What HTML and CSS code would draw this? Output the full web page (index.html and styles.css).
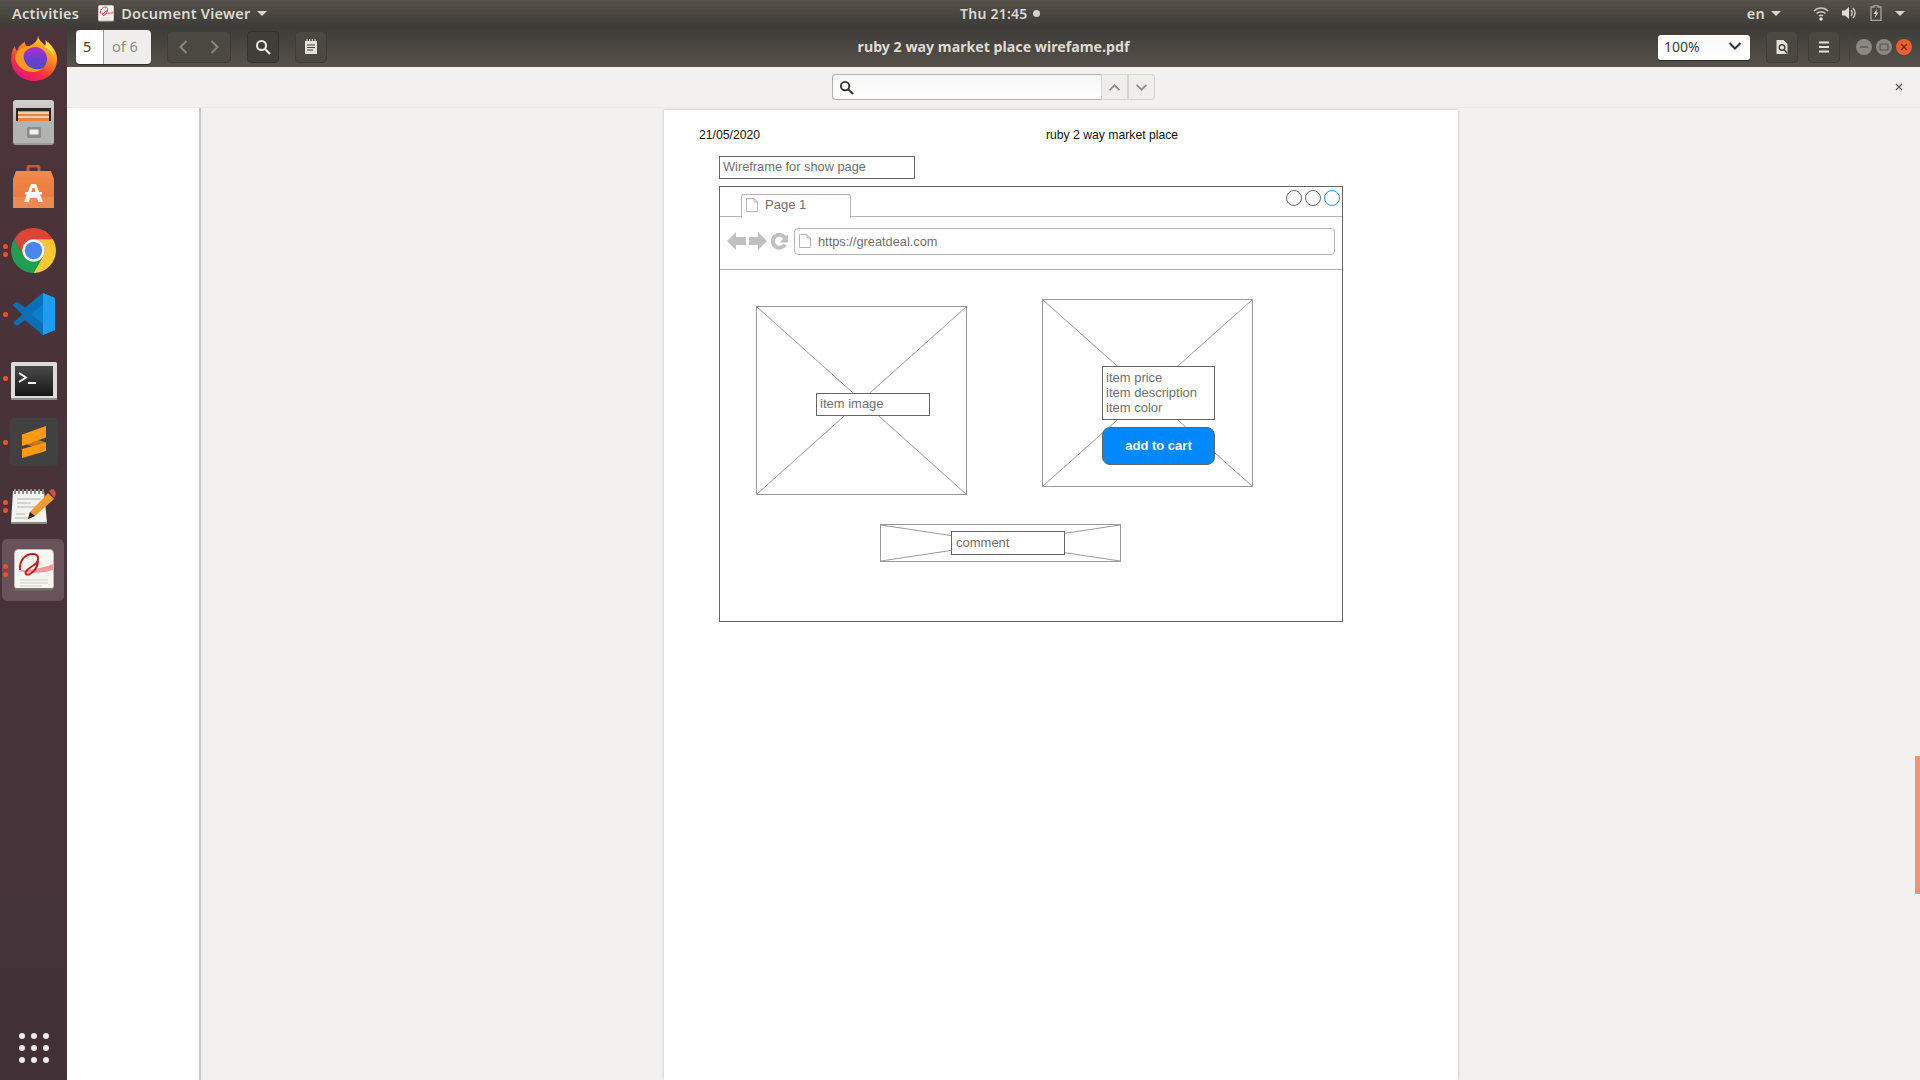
FILE: index.html
```html
<!DOCTYPE html>
<html lang="en">
<head>
<meta charset="utf-8">
<title>ruby 2 way market place wirefame.pdf</title>
<link rel="stylesheet" href="styles.css">
</head>
<body>
<svg class="defs" width="0" height="0" aria-hidden="true">
  <defs>
    <linearGradient id="ffBase" x1="0.8" y1="0.1" x2="0.3" y2="1">
      <stop offset="0" stop-color="#ffd43a"/><stop offset="0.35" stop-color="#ff8a1e"/><stop offset="0.7" stop-color="#f5333d"/><stop offset="1" stop-color="#e3127f"/>
    </linearGradient>
    <linearGradient id="ffCore" x1="0.5" y1="0" x2="0.5" y2="1">
      <stop offset="0" stop-color="#b52bc9"/><stop offset="0.5" stop-color="#6b3ed0"/><stop offset="1" stop-color="#4a4cc9"/>
    </linearGradient>
    <linearGradient id="bag" x1="0" y1="0" x2="0" y2="1">
      <stop offset="0" stop-color="#f08a4a"/><stop offset="1" stop-color="#e8743a"/>
    </linearGradient>
    <linearGradient id="cab" x1="0" y1="0" x2="0" y2="1">
      <stop offset="0" stop-color="#d0d0ce"/><stop offset="1" stop-color="#9a9a98"/>
    </linearGradient>
    <linearGradient id="term" x1="0" y1="0" x2="0" y2="1">
      <stop offset="0" stop-color="#4a4a4a"/><stop offset="1" stop-color="#161616"/>
    </linearGradient>
    <symbol id="evince" viewBox="0 0 40 42">
      <rect x="0.5" y="0.5" width="39" height="40" rx="4" fill="#f8f6f3" stroke="#bdbab5"/>
      <rect x="1" y="39" width="38" height="2.5" rx="1" fill="#77736e"/>
      <path d="M4 22C14 20 25 21 39 15V21C27 25 15 24 4 22Z" fill="#ee9a9a"/>
      <path d="M6 21C5 11 12 4 20 5C26 6 25 13 20 16C15 19 10 23 12 25C15 28 24 20 24 12" fill="none" stroke="#d2181f" stroke-width="2"/>
      <path d="M6 31H34M6 34H34M6 37H28" stroke="#cfccc7" stroke-width="1"/>
    </symbol>
  </defs>
</svg>

<header class="topbar">
  <div class="top-left">
    <span class="activities">Activities</span>
    <span class="app-menu">
      <svg class="app-icon"><use href="#evince"/></svg>
      <span>Document Viewer</span>
      <i class="caret"></i>
    </span>
  </div>
  <div class="clock"><span>Thu 21:45</span><i class="clock-dot"></i></div>
  <div class="top-right">
    <span class="lang">en</span><i class="caret lang-caret"></i>
    <svg class="tray wifi" viewBox="0 0 16 16"><path d="M1 6C5 2 11 2 15 6M3.5 8.5C6 6 10 6 12.500 8.500M6 11C7 10 9 10 10 11" fill="none" stroke="#c9c6bf" stroke-width="1.500"/><circle cx="8" cy="14" r="1.700" fill="#e6e3dc"/></svg>
    <svg class="tray vol" viewBox="0 0 16 16"><path d="M1 5.500H4L8 2V14L4 10.500H1Z" fill="#e0ddd6"/><path d="M10 5C11.500 7 11.500 9 10 11M12 3C14.500 6 14.500 10 12 13" fill="none" stroke="#c9c6bf" stroke-width="1.400"/></svg>
    <svg class="tray batt" viewBox="0 0 12 16"><path d="M4 .5H8V2H11V15.500H1V2H4Z" fill="none" stroke="#a5a29b" stroke-width="1.300"/><path d="M7 4L3.500 9H5.700L4.700 13L8.500 7.500H6.300Z" fill="#e0ddd6"/></svg>
    <i class="caret sys-caret"></i>
  </div>
</header>

<div class="desktop">
  <nav class="dock">
    <div class="dock-list">
      <div class="dock-item">
        <svg class="ic-firefox" viewBox="0 0 46 46">
          <path d="M27 0C27 5 32 8 36 12C37 9 37 8 37 7C43 13 46 18 46 24C46 37 36 46 23 46C10 46 0 36 0 24C0 19 1 15 4 11C4 13 5 15 6 16C8 10 12 8 14 7C14 10 15 11 17 12C22 9 27 7 27 0Z" fill="url(#ffBase)"/>
          <circle cx="24" cy="24" r="12" fill="url(#ffCore)"/>
          <path d="M4 22C7 13 15 10 24 11C19 12 17 14 14 16C12 19 12 23 14 27C17 33 25 36 32 33C26 39 15 38 9 32C6 29 4 26 4 22Z" fill="#ff9a22"/>
          <path d="M34 5C39 9 43 15 43 22C41 17 38 14 34 12C35 9 35 7 34 5Z" fill="#ffe34a"/>
        </svg>
      </div>
      <div class="dock-item">
        <svg class="ic-files" viewBox="0 0 41 45">
          <rect x="0" y="0" width="41" height="45" rx="3" fill="url(#cab)"/>
          <rect x="3" y="8" width="35" height="14" fill="#2a2522"/>
          <rect x="5" y="11" width="31" height="11" fill="#e8853a"/>
          <path d="M5 13H36M5 17H36" stroke="#f7e8d4" stroke-width="1.400"/>
          <rect x="0" y="21" width="41" height="22" fill="#b3b3b1"/>
          <rect x="14" y="27" width="14" height="11" rx="1.500" fill="#8b8b89"/>
          <rect x="16.500" y="29.500" width="9" height="5" fill="#f1f1ef"/>
        </svg>
      </div>
      <div class="dock-item">
        <svg class="ic-soft" viewBox="0 0 41 43">
          <path d="M15 8V3Q15 1 17 1H24Q26 1 26 3V8" fill="none" stroke="#c75a26" stroke-width="3"/>
          <path d="M3 6H38L41 14V43H0V14Z" fill="url(#bag)"/>
          <path d="M0 32H41V43H0Z" fill="#ec8a52"/>
          <path d="M18 19H23L30 37H25.500L24 33H17L15.500 37H11ZM19.500 23L18 28H23L21.500 23Z" fill="#fff" fill-rule="evenodd"/>
          <rect x="12" y="27" width="17" height="2.500" fill="#fff"/>
        </svg>
      </div>
      <div class="dock-item">
        <span class="pips"><i></i><i></i></span>
        <svg class="ic-chrome" viewBox="0 0 48 48">
          <path d="M24 2A22 22 0 0 0 5 13l9.500 16.500A11 11 0 0 1 24 13h19A22 22 0 0 0 24 2z" fill="#db4437"/>
          <path d="M43 13H24a11 11 0 0 1 9.500 16.500L24 46A22 22 0 0 0 43 13z" fill="#fcc934"/>
          <path d="M5 13A22 22 0 0 0 24 46l9.500-16.500a11 11 0 0 1-19 0z" fill="#1f9e50"/>
          <circle cx="24" cy="24" r="11" fill="#f4f4f4"/>
          <circle cx="24" cy="24" r="8.500" fill="#4a86f0"/>
        </svg>
      </div>
      <div class="dock-item">
        <span class="pips"><i></i></span>
        <svg class="ic-code" viewBox="0 0 42 42">
          <path d="M30 0L42 5V37L30 42L0 12L4 9L12 15Z" fill="#0a7fcb"/>
          <path d="M30 0L42 5V37L30 42L12 27L4 33L0 30L10 21L0 12L4 9L12 15ZM30 11L18 21L30 31Z" fill="#0a6fb8" fill-rule="evenodd"/>
          <path d="M30 0L42 5V37L30 42Z" fill="#1f9df0"/>
        </svg>
      </div>
      <div class="dock-item">
        <span class="pips"><i></i></span>
        <svg class="ic-term" viewBox="0 0 46 38">
          <rect x="0" y="0" width="46" height="38" rx="1.500" fill="#dcdcda"/>
          <rect x="0" y="36" width="46" height="2" fill="#8e8e8c"/>
          <rect x="4" y="4" width="38" height="30" fill="url(#term)"/>
          <path d="M8 11L15 15.500L8 20" fill="none" stroke="#f4f4f4" stroke-width="2"/>
          <path d="M17 21H25" stroke="#f4f4f4" stroke-width="2"/>
        </svg>
      </div>
      <div class="dock-item">
        <span class="pips"><i></i></span>
        <svg class="ic-sub" viewBox="0 0 48 48">
          <rect width="48" height="48" rx="4" fill="#414141"/>
          <path d="M12 16.500L36 24.500V33L12 25Z" fill="#c9780e"/>
          <path d="M36 8L12 16.500V28L36 19.500Z" fill="#ff9a12"/>
          <path d="M36 24.500V33L12 40V31Z" fill="#ff9a12"/>
        </svg>
      </div>
      <div class="dock-item">
        <span class="pips"><i></i><i></i></span>
        <svg class="ic-gedit" viewBox="0 0 45 37">
          <path d="M2 3H33L36 35H0Z" fill="#f3f3f0"/>
          <path d="M0 34H36V36H0Z" fill="#8c8a85"/>
          <path d="M4 1V6M8 1V6M12 1V6M16 1V6M20 1V6M24 1V6M28 1V6M32 1V6" stroke="#8c8a85" stroke-width="2"/>
          <path d="M6 11H30M6 15H20M6 19H26M5 26H14M4 30H18" stroke="#b5b3ae" stroke-width="1.200"/>
          <path d="M37 5L43 11L24 28L17 31L19 24Z" fill="#f29b2e"/>
          <path d="M38 3L41 1Q43 1 44 3L45 6L43 10Z" fill="#d84a4a"/>
          <path d="M19 24L24 28L17 31Z" fill="#2b2b2b"/>
        </svg>
      </div>
      <div class="dock-item active">
        <span class="pips"><i></i><i></i></span>
        <svg class="ic-evince"><use href="#evince"/></svg>
      </div>
    </div>
    <div class="apps">
      <i></i><i></i><i></i><i></i><i></i><i></i><i></i><i></i><i></i>
    </div>
  </nav>

  <div class="window">
    <div class="headerbar">
      <div class="hb-left">
        <div class="pagebox"><span class="page-cur">5</span><span class="page-of">of 6</span></div>
        <div class="hbtn nav-group">
          <svg viewBox="0 0 16 16"><path d="M10.500 2L4.500 8L10.500 14" fill="none" stroke="#8a877e" stroke-width="2"/></svg>
          <svg viewBox="0 0 16 16"><path d="M5.500 2L11.500 8L5.500 14" fill="none" stroke="#8a877e" stroke-width="2"/></svg>
        </div>
        <div class="hbtn hbtn-on">
          <svg viewBox="0 0 16 16"><circle cx="6.500" cy="6.500" r="4.500" fill="none" stroke="#eeeae2" stroke-width="2"/><path d="M10 10L15 15" stroke="#eeeae2" stroke-width="2.200"/></svg>
        </div>
        <div class="hbtn">
          <svg viewBox="0 0 16 16"><path d="M2 2H14V15H2Z" fill="#e4e1da"/><path d="M4 0V3M6.700 0V3M9.300 0V3M12 0V3" stroke="#e4e1da" stroke-width="1"/><path d="M4 6H12M4 8.500H12M4 11H10" stroke="#45433d" stroke-width="1"/></svg>
        </div>
      </div>
      <div class="hb-title">ruby 2 way market place wirefame.pdf</div>
      <div class="hb-right">
        <div class="zoombox"><span>100%</span><svg viewBox="0 0 14 10"><path d="M1.500 2L7 7.500L12.500 2" fill="none" stroke="#33322e" stroke-width="2"/></svg></div>
        <div class="hbtn"><svg viewBox="0 0 16 16"><path d="M2.500 1H9.500L13.500 5V15H2.500Z" fill="#e4e1da"/><circle cx="8" cy="8.500" r="2.800" fill="none" stroke="#45433d" stroke-width="1.400"/><path d="M10 10.500L13 14" stroke="#45433d" stroke-width="1.600"/></svg></div>
        <div class="hbtn hbtn-menu"><svg viewBox="0 0 16 16"><path d="M3 3.500H13M3 8H13M3 12.500H13" stroke="#e4e1da" stroke-width="2"/></svg></div>
        <i class="hb-sep"></i>
        <div class="winctl">
          <span class="wbtn"><svg viewBox="0 0 16 16"><path d="M4 8H12" stroke="#56534c" stroke-width="1.200"/></svg></span>
          <span class="wbtn"><svg viewBox="0 0 16 16"><rect x="4" y="5" width="8" height="6" rx="1" fill="none" stroke="#56534c" stroke-width="1.200"/></svg></span>
          <span class="wbtn wclose"><svg viewBox="0 0 16 16"><path d="M5 5L11 11M11 5L5 11" stroke="#7a2a10" stroke-width="1.400"/></svg></span>
        </div>
      </div>
    </div>

    <div class="findbar">
      <span></span>
      <div class="find">
        <div class="find-entry"><svg viewBox="0 0 16 16"><circle cx="6.500" cy="6.500" r="4.500" fill="none" stroke="#33322e" stroke-width="2"/><path d="M10 10L15 15" stroke="#33322e" stroke-width="2.200"/></svg></div>
        <div class="find-btn"><svg viewBox="0 0 14 10"><path d="M1.500 8L7 2.500L12.500 8" fill="none" stroke="#8f8d86" stroke-width="2"/></svg></div>
        <div class="find-btn"><svg viewBox="0 0 14 10"><path d="M1.500 2L7 7.500L12.500 2" fill="none" stroke="#8f8d86" stroke-width="2"/></svg></div>
      </div>
      <svg class="find-close" viewBox="0 0 8 8"><path d="M1 1L7 7M7 1L1 7" stroke="#55534d" stroke-width="1.100"/></svg>
    </div>

    <div class="content">
      <aside class="sidebar"></aside>
      <main class="docview">
        <article class="page">
          <div class="page-head"><span class="page-date">21/05/2020</span><span>ruby 2 way market place</span></div>
          <div class="wf-title">Wireframe for show page</div>
          <section class="frame">
            <div class="tabstrip">
              <div class="tab">
                <svg class="doc-ic" viewBox="0 0 12 14"><path d="M.5.5H8L11.500 4V13.500H.5ZM8 .5V4H11.500" fill="#fff" stroke="#b5b5b5"/></svg>
                <span>Page 1</span>
              </div>
              <div class="circles"><i></i><i></i><i class="blue"></i></div>
            </div>
            <div class="navrow">
              <svg class="nav-ic" viewBox="0 0 61 18">
                <path d="M0 9L9 0V5H19V13H9V18Z" fill="#c0c0c0"/>
                <path d="M40 9L31 0V5H22V13H31V18Z" fill="#c0c0c0"/>
                <path d="M58 6A6.500 6.500 0 1 0 58 12.500" fill="none" stroke="#c0c0c0" stroke-width="4"/>
                <path d="M61 2V10.500H52.500Z" fill="#c0c0c0"/>
              </svg>
              <div class="urlbar">
                <svg class="doc-ic" viewBox="0 0 12 14"><path d="M.5.5H8L11.500 4V13.500H.5ZM8 .5V4H11.500" fill="#fff" stroke="#b5b5b5"/></svg>
                <span>https://greatdeal.com</span>
              </div>
            </div>
            <div class="canvas">
              <div class="ph ph-image"><svg viewBox="0 0 100 100" preserveAspectRatio="none"><path d="M0 0L100 100M100 0L0 100"/></svg></div>
              <div class="ph ph-info"><svg viewBox="0 0 100 100" preserveAspectRatio="none"><path d="M0 0L100 100M100 0L0 100"/></svg></div>
              <div class="ph ph-comment"><svg viewBox="0 0 100 100" preserveAspectRatio="none"><path d="M0 0L100 100M100 0L0 100"/></svg></div>
              <div class="label lb-image">item image</div>
              <div class="label lb-info">item price<br>item description<br>item color</div>
              <div class="cart-btn">add to cart</div>
              <div class="label lb-comment">comment</div>
            </div>
          </section>
        </article>
        <i class="scroll-mark"></i>
      </main>
    </div>
  </div>
</div>
</body>
</html>
```

FILE: styles.css
```css
* { box-sizing: border-box; }
html, body { height: 100%; }
body {
  margin: 0;
  overflow: hidden;
  display: flex;
  flex-direction: column;
  font-family: "Noto Sans", "Liberation Sans", sans-serif;
  background: #f2f1ef;
}
i { display: block; font-style: normal; }
svg { display: block; }
.defs { position: absolute; }

/* top bar */
.topbar {
  flex: none;
  height: 27px;
  display: flex;
  align-items: center;
  padding-bottom: 1px;
  background: linear-gradient(#57534a, #3c3b37);
  color: #dcd9d1;
  font-size: 14.500px;
  font-weight: 600;
  letter-spacing: .25px;
}
.top-left { width: 960px; display: flex; align-items: center; padding-left: 12px; }
.app-menu { display: flex; align-items: center; margin-left: 19px; }
.app-icon { width: 16px; height: 17px; margin-right: 7px; }
.caret { width: 0; height: 0; border: 5px solid transparent; border-top-color: #d8d5cd; border-bottom-width: 0; margin-left: 6px; }
.clock { display: flex; align-items: center; font-size: 14px; }
.clock-dot { width: 7px; height: 7px; border-radius: 50%; background: #d5d2ca; margin-left: 5px; }
.top-right { margin-left: auto; display: flex; align-items: center; padding-right: 15px; }
.lang-caret { margin-right: 32px; }
.tray { height: 16px; }
.wifi { width: 16px; margin-right: 12px; }
.vol { width: 16px; margin-right: 13px; }
.batt { width: 12px; }
.sys-caret { margin-left: 13px; }

/* dock */
.desktop { flex: 1; min-height: 0; display: flex; }
.dock {
  flex: none;
  width: 67px;
  display: flex;
  flex-direction: column;
  justify-content: space-between;
  background: linear-gradient(#4c343a, #413137);
  padding-bottom: 17px;
}
.dock-list { margin-top: -1px; }
.dock-item {
  position: relative;
  height: 64px;
  display: flex;
  align-items: center;
  justify-content: center;
}
.dock-item.active::before {
  content: "";
  position: absolute;
  left: 2px;
  right: 3px;
  top: 1px;
  bottom: 1px;
  border-radius: 5px;
  background: #67525a;
}
.dock-item svg { position: relative; }
.pips {
  position: absolute;
  left: 3px;
  top: 0;
  bottom: 0;
  display: flex;
  flex-direction: column;
  justify-content: center;
  gap: 3px;
  z-index: 1;
}
.pips i { width: 5px; height: 5px; border-radius: 50%; background: #e95420; }
.ic-firefox { width: 46px; height: 46px; }
.ic-files { width: 41px; height: 45px; }
.ic-soft { width: 41px; height: 43px; }
.ic-chrome { width: 49px; height: 49px; }
.ic-code { width: 42px; height: 42px; }
.ic-term { width: 46px; height: 38px; margin-top: 5px; }
.ic-sub { width: 48px; height: 48px; }
.ic-gedit { width: 45px; height: 37px; }
.ic-evince { width: 40px; height: 42px; }
.apps {
  align-self: center;
  display: grid;
  grid-template-columns: repeat(3, 6px);
  gap: 6px;
}
.apps i { width: 6px; height: 6px; border-radius: 50%; background: #ecebe8; }

/* window */
.window { flex: 1; min-width: 0; display: flex; flex-direction: column; }
.headerbar {
  flex: none;
  height: 40px;
  display: grid;
  grid-template-columns: 1fr auto 1fr;
  align-items: center;
  background: linear-gradient(#3c3b37, #57534a);
}
.hb-left { display: flex; align-items: center; gap: 16px; padding-left: 9px; }
.hb-right { display: flex; align-items: center; justify-content: flex-end; padding-right: 8px; }
.hb-title { color: #dfdbd2; font-size: 14.200px; font-weight: 700; padding-bottom: 2px; }
.pagebox {
  width: 75px;
  height: 34px;
  display: flex;
  border-radius: 4px;
  font-size: 14.500px;
  overflow: hidden;
  box-shadow: 0 1px 1px #2b2a26;
}
.page-cur { width: 28px; padding-left: 7px; line-height: 33px; background: #fff; color: #3a3a3a; border-right: 1px solid #999; }
.page-of { flex: 1; padding-left: 8px; line-height: 33px; background: #efeeec; color: #8f8d88; }
.hbtn {
  width: 32px;
  height: 32px;
  display: flex;
  align-items: center;
  justify-content: center;
  border-radius: 4px;
  border: 1px solid #3d3c37;
  background: #4a4841;
}
.hbtn svg { width: 16px; height: 16px; }
.hbtn-on { background: #3f3e39; border-color: #33322e; }
.nav-group { width: 64px; gap: 14px; }
.zoombox {
  width: 92px;
  height: 25px;
  display: flex;
  align-items: center;
  justify-content: space-between;
  padding: 0 8px 2px 6px;
  margin-right: 16px;
  border-radius: 3px;
  background: linear-gradient(#f9f9f8, #fff);
  box-shadow: 0 1px 1px #2b2a26;
  color: #3d3d3d;
  font-size: 14px;
}
.zoombox svg { width: 14px; height: 10px; }
.hbtn-menu { margin-left: 10px; }
.hb-sep { width: 1px; height: 28px; background: #46443e; margin: 0 6px 0 9px; }
.winctl { display: flex; gap: 4px; }
.wbtn { width: 16px; height: 16px; border-radius: 50%; background: #8b887f; }
.wclose { background: #ea5f2c; }

/* find bar */
.findbar {
  flex: none;
  height: 41px;
  display: grid;
  grid-template-columns: 1fr auto 1fr;
  align-items: center;
  background: #f2f1ef;
  border-bottom: 1px solid #ebe9e6;
}
.find { display: flex; height: 26px; }
.find-entry {
  width: 269px;
  display: flex;
  align-items: center;
  padding-left: 6px;
  background: linear-gradient(#f6f6f5, #fff);
  border: 1px solid #b4b2ad;
  border-right: 0;
  border-radius: 4px 0 0 4px;
}
.find-entry svg { width: 15px; height: 15px; }
.find-btn {
  width: 27px;
  display: flex;
  align-items: center;
  justify-content: center;
  background: #efeeeb;
  border: 1px solid #d6d4cf;
  border-left-width: 0;
  border-left-color: transparent;
  box-shadow: inset 1px 0 0 #d6d4cf;
}
.find-btn:last-child { border-radius: 0 4px 4px 0; }
.find-btn svg { width: 13px; height: 9px; }
.find-close { width: 8px; height: 8px; justify-self: end; margin-right: 17px; }

/* content */
.content { flex: 1; min-height: 0; display: flex; }
.sidebar { flex: none; width: 134px; background: #fff; border-right: 2px solid #c9c7c3; }
.docview { position: relative; flex: 1; min-width: 0; overflow: hidden; background: #f2f1ef; padding: 2px 0 0 463px; }
.scroll-mark { position: absolute; right: 0; top: 648px; width: 5px; height: 138px; background: #f4946a; }

/* pdf page */
.page {
  width: 794px;
  height: 100%;
  background: #fff;
  box-shadow: 0 0 3px #bdbbb7;
  padding-top: 16px;
  font-family: "Liberation Sans", Arial, sans-serif;
  color: #707070;
}
.page-head {
  height: 18px;
  display: flex;
  align-items: center;
  padding-left: 35px;
  font-size: 12.200px;
  color: #111;
}
.page-date { width: 347px; }
.wf-title {
  width: 196px;
  height: 23px;
  margin: 12px 0 7px 55px;
  padding: 0 3px;
  border: 1px solid #666;
  font-size: 12.800px;
  line-height: 20px;
}
.frame {
  width: 624px;
  height: 436px;
  margin-left: 55px;
  border: 1px solid #666;
  display: flex;
  flex-direction: column;
}
.tabstrip {
  position: relative;
  flex: none;
  height: 30px;
  border-bottom: 1px solid #b5b5b5;
  padding-left: 21px;
}
.tab {
  width: 110px;
  height: 24px;
  margin-top: 7px;
  display: flex;
  align-items: center;
  gap: 7px;
  padding: 0 0 4px 4px;
  background: #fff;
  border: 1px solid #b5b5b5;
  border-bottom: 0;
  border-radius: 3px 3px 0 0;
  font-size: 13px;
}
.doc-ic { width: 12px; height: 14px; flex: none; }
.circles { position: absolute; right: 2px; top: 3px; display: flex; gap: 3px; }
.circles i { width: 16px; height: 16px; border-radius: 50%; border: 1px solid #666; }
.circles .blue { border-color: #1e90ff; }
.navrow {
  flex: none;
  height: 53px;
  display: flex;
  align-items: center;
  gap: 6px;
  padding: 0 7px 4px 7px;
  border-bottom: 1px solid #b5b5b5;
}
.nav-ic { width: 61px; height: 18px; flex: none; }
.urlbar {
  flex: 1;
  height: 27px;
  display: flex;
  align-items: center;
  gap: 7px;
  padding-left: 4px;
  border: 1px solid #b5b5b5;
  border-radius: 4px;
  font-size: 12.800px;
}
.canvas { position: relative; flex: 1; }
.ph { position: absolute; border: 1px solid #999; }
.ph svg { width: 100%; height: 100%; }
.ph path { fill: none; stroke: #999; stroke-width: 1; vector-effect: non-scaling-stroke; }
.ph-image { left: 36px; top: 36px; width: 211px; height: 189px; }
.ph-info { left: 322px; top: 29px; width: 211px; height: 188px; }
.ph-comment { left: 160px; top: 254px; width: 241px; height: 38px; }
.label {
  position: absolute;
  background: #fff;
  border: 1px solid #666;
  padding: 0 3px;
  font-size: 13px;
  line-height: 15px;
}
.lb-image { left: 96px; top: 123px; width: 114px; height: 23px; line-height: 19px; }
.lb-info { left: 382px; top: 96px; width: 113px; height: 54px; padding-top: 2.500px; }
.lb-comment { left: 231px; top: 261px; width: 114px; height: 24px; padding-left: 4px; line-height: 21px; }
.cart-btn {
  position: absolute;
  left: 382px;
  top: 157px;
  width: 113px;
  height: 38px;
  display: flex;
  align-items: center;
  justify-content: center;
  padding-bottom: 1px;
  background: #0088ff;
  border: 1px solid #666;
  border-radius: 8px;
  color: #fff;
  font-size: 13px;
  font-weight: 700;
}
```
